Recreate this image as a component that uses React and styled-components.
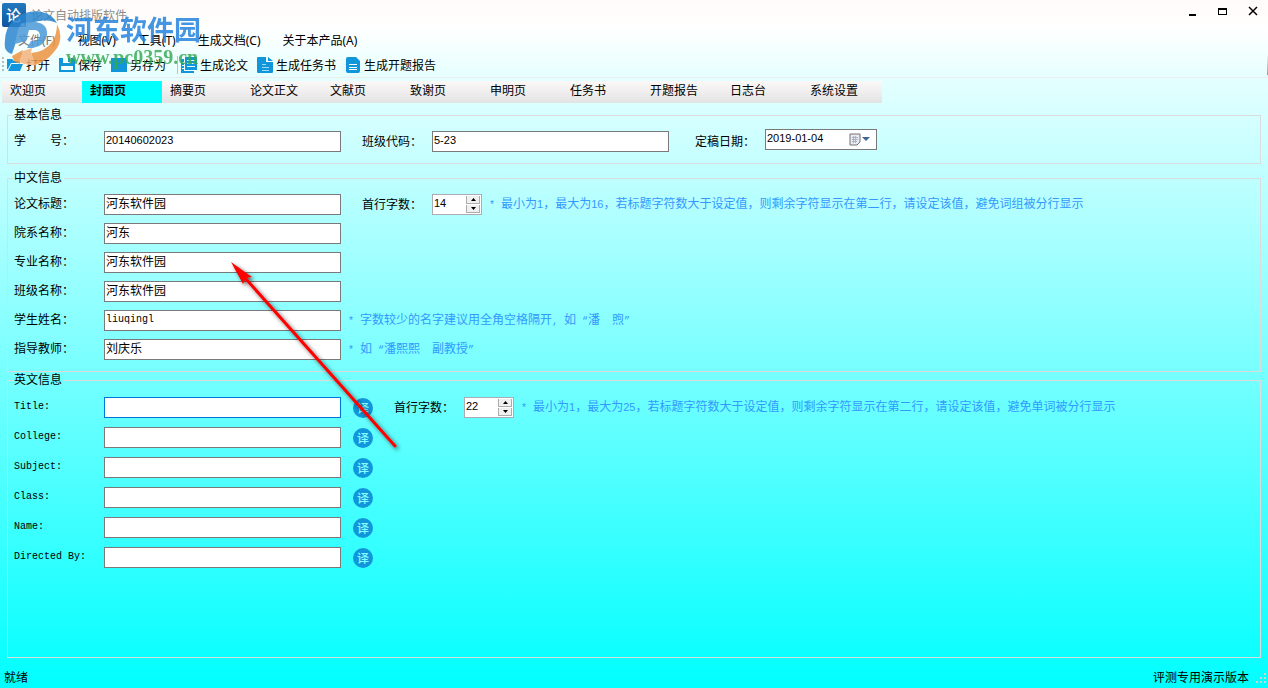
import React from "react";
import styled, { createGlobalStyle, css } from "styled-components";

const BLUE = "#1296db";
const CJK = '"Noto Sans CJK SC", sans-serif';

const GlobalStyle = createGlobalStyle`
  * { box-sizing: border-box; }
  body { margin: 0; font: 12px/14px ${CJK}; color: #000; }
  button, input { font: inherit; color: inherit; }
  button { border: 0; padding: 0; background: none; }
`;

const Window = styled.div`
  position: relative;
  display: flex;
  flex-direction: column;
  min-height: 100vh;
  background: linear-gradient(#fffbf9 0, #ffffff 28px, #e2ffff 84px, #00ffff 100%);
`;

const TitleBar = styled.header`
  display: flex;
  align-items: center;
  gap: 5px;
  height: 30px;
  padding: 0 10px 0 2px;
`;

const Title = styled.h1`
  flex: 1;
  margin: 0;
  font-size: 12px;
  font-weight: 400;
  line-height: 14px;
  color: #8c8c8c;
`;

const WindowButtons = styled.div`
  display: flex;
  gap: 20px;
  padding-bottom: 8px;
`;

const WindowButton = styled.button`
  display: flex;
  width: 10px;
  height: 10px;
`;

const MenuBar = styled.nav`
  display: flex;
  gap: 22px;
  height: 22px;
  padding-left: 18px;
`;

const MenuItem = styled.button`
  line-height: 22px;
  font-family: "Noto Sans", ${CJK};
  color: ${(p) => (p.$faded ? "#777" : "#000")};
`;

const Toolbar = styled.div`
  display: flex;
  align-items: center;
  height: 26px;
  padding: 1px 0 0 2px;
  border-bottom: 1px solid #ececec;
`;

const Grip = styled.span`
  width: 2px;
  height: 16px;
  margin-right: 3px;
  background: repeating-linear-gradient(#b5bcbc 0 2px, transparent 2px 4px);
`;

const Separator = styled.span`
  width: 1px;
  height: 18px;
  margin: 0 3px 0 2px;
  background: #bcc4c4;
`;

const ToolbarEnd = styled.span`
  width: 1px;
  height: 20px;
  margin-left: auto;
  background: linear-gradient(transparent, #999);
`;

const ToolButton = styled.button`
  display: flex;
  align-items: center;
  gap: 3px;
  margin-right: 9px;
  white-space: nowrap;
  line-height: 20px;
`;

const TabBar = styled.div`
  display: flex;
  align-self: flex-start;
  margin: 3px 0 0 2px;
  background: linear-gradient(#fcf8f8, #e3e3e3);
`;

const Tab = styled.button`
  width: 80px;
  height: 22px;
  padding: 0 0 4px 8px;
  text-align: left;
  line-height: 18px;
  font-weight: ${(p) => (p.$active ? 700 : 400)};
  background: ${(p) => (p.$active ? "#00ffff" : "none")};
`;

const Panel = styled.main`
  flex: 1;
  display: flex;
  flex-direction: column;
  padding: 5px 7px 0;
`;

const Group = styled.fieldset`
  flex: ${(p) => (p.$grow ? 1 : "none")};
  min-width: 0;
  margin: 0 0 ${(p) => p.$after || 0}px;
  padding: ${(p) => (p.$grow ? 10 : 9)}px 0 11px 6px;
  border: 1px solid #dcdcdc;
`;

const Legend = styled.legend`
  height: 14px;
  padding: 0 2px 0 0;
  line-height: 12px;
`;

const Rows = styled.div`
  display: flex;
  flex-direction: column;
  gap: ${(p) => p.$gap}px;
`;

const Row = styled.div`
  display: flex;
  align-items: center;
  height: 21px;
`;

const latin = {
  digits: css`font-family: "Liberation Sans", sans-serif; font-size: 11px;`,
  mono: css`font-family: "Liberation Mono", monospace; font-size: 10px;`,
};

const Label = styled.label`
  flex: none;
  width: ${(p) => (p.$lead ? 90 : 70)}px;
  padding-bottom: ${(p) => (p.$lead && !p.$mono ? 4 : 2)}px;
  white-space: pre;
  ${(p) => p.$mono && latin.mono}
`;

const TextBox = styled.input`
  width: 237px;
  height: 21px;
  padding: 0 2px ${(p) => (p.$face ? 3 : 5)}px 1px;
  border: 1px solid ${(p) => (p.$focused ? "#0078d7" : "#7a7a7a")};
  background: #fff;
  outline: 0;
  ${(p) => latin[p.$face]}
`;

const Space = styled.span`
  flex: none;
  width: ${(p) => p.$w}px;
`;

const SpinFrame = styled.span`
  display: flex;
  flex: none;
  width: 50px;
  height: 21px;
  padding: 1px;
  border: 1px solid #abadb3;
  background: #fff;
`;

const SpinInput = styled.input`
  flex: 1;
  min-width: 0;
  padding: 0 0 3px;
  border: 0;
  outline: 0;
  appearance: textfield;
  font: 11px/14px "Liberation Sans", sans-serif;
  &::-webkit-inner-spin-button { appearance: none; }
`;

const SpinButtons = styled.span`
  display: flex;
  flex-direction: column;
  gap: 1px;
  width: 14px;
`;

const SpinButton = styled.button`
  flex: 1;
  display: flex;
  align-items: center;
  justify-content: center;
  background: #f0f0f0;
  border: solid #adadad;
  border-width: 0 1px 1px;
`;

const DateFrame = styled.span`
  display: flex;
  align-items: center;
  width: 112px;
  height: 21px;
  margin-bottom: 5px;
  border: 1px solid #7a7a7a;
  background: #fff;
`;

const DateInput = styled.input`
  flex: 1;
  min-width: 0;
  padding: 0 1px 2px;
  border: 0;
  outline: 0;
  font: 11px/14px "Liberation Sans", sans-serif;
`;

const DateButton = styled.button`
  display: flex;
  width: 27px;
`;

const Hint = styled.span`
  white-space: pre;
  color: #3399ff;
  padding-left: 7px;
`;

const Latin = styled.span`
  ${(p) => latin[p.$face]}
`;

const Translate = styled.button`
  flex: none;
  width: 20px;
  height: 20px;
  margin-left: 12px;
  border-radius: 50%;
  background: ${BLUE};
  color: #8ff;
  font-weight: 500;
  line-height: 18px;
  text-align: center;
`;

const StatusBar = styled.footer`
  display: flex;
  align-items: center;
  justify-content: space-between;
  height: 30px;
  padding: 8px 1px 0 4px;
`;

const StatusEnd = styled.span`
  display: flex;
  align-items: flex-end;
  gap: 7px;
`;

const Watermark = styled.div`
  position: absolute;
  left: 4px;
  top: 10px;
  display: flex;
  gap: 4px;
  pointer-events: none;
`;

const WatermarkText = styled.div`
  opacity: 0.82;
  padding-top: 4px;
`;

const WatermarkName = styled.div`
  font: 700 27px/30px ${CJK};
  color: #1d7fdc;
`;

const WatermarkSite = styled.div`
  font: 700 20px/26px "Liberation Serif", serif;
  color: #35a853;
`;

const Arrow = styled.svg`
  position: absolute;
  left: 220px;
  top: 250px;
  pointer-events: none;
`;

function AppIcon() {
  return (
    <svg width="24" height="24" viewBox="0 0 24 24" overflow="visible">
      <defs>
        <linearGradient id="app" x1="0" y1="0" x2="0" y2="1">
          <stop offset="0" stopColor="#2279bd" />
          <stop offset="1" stopColor="#0f559d" />
        </linearGradient>
      </defs>
      <rect width="24" height="24" rx="2" fill="url(#app)" />
      <text x="4" y="18" fontSize="15" fontWeight="500" fill="#fff" fontFamily="Noto Sans CJK SC">论</text>
      <circle cx="21" cy="22" r="1.500" fill="#7fb5e0" />
    </svg>
  );
}

function FolderIcon() {
  return (
    <svg width="16" height="16" viewBox="0 0 16 16" fill={BLUE}>
      <path d="M0 2h5l2 2h6v2H4L1 12H0z" />
      <path d="M4.500 7H16l-3 7H1z" />
    </svg>
  );
}

function SaveIcon({ solid }) {
  return (
    <svg width="16" height="16" viewBox="0 0 16 16">
      <path d="M0 1h14l2 2v12H0z" fill={BLUE} />
      {!solid && <path d="M4 1h8v5H4zM2 9h12v4H2z" fill="#f2ffff" />}
      {!solid && <path d="M9 1h2v4H9z" fill={BLUE} />}
    </svg>
  );
}

function PagesIcon() {
  return (
    <svg width="16" height="16" viewBox="0 0 16 16">
      <path d="M0 2h3v12h10v2H0z" fill={BLUE} />
      <path d="M4 0h12v13H4z" fill={BLUE} />
      <path d="M6 3.500h8M6 6.500h8M6 9.500h8" stroke="#dff" />
      <path d="M1 5.500h2M1 8.500h2M1 11.500h2" stroke="#dff" />
    </svg>
  );
}

function DocIcon({ narrow }) {
  return narrow ? (
    <svg width="16" height="16" viewBox="-1 0 16 16">
      <path d="M2 0h8l4 4v10q0 2-2 2H2q-2 0-2-2V2q0-2 2-2z" fill={BLUE} />
      <path d="M3 7.500h8M3 10.500h8M3 12.500h8" stroke="#fff" />
    </svg>
  ) : (
    <svg width="16" height="16" viewBox="0 0 16 16">
      <path d="M1 0h8v5h7v10q0 1-1 1H1q-1 0-1-1V1q0-1 1-1zM11 0l5 4h-5z" fill={BLUE} />
      <path d="M5 7.500h4M5 10.500h7M5 13.500h7" stroke="#9fdcf5" />
    </svg>
  );
}

function WatermarkLogo() {
  return (
    <svg width="58" height="58" viewBox="0 0 58 58" opacity="0.85">
      <path d="M1 38Q-1 18 12 8 24-1 38 2 48 4 53 13 42 8 31 12 17 18 12 32L8 44Q3 43 1 38z" fill="#2a86cf" />
      <path d="M17 13l15-1q12 2 11 13-2 11-14 13h-6l4-7h3q6-1 6-6-1-5-6-5h-5l-3 11-11 3q2-14 6-21z" fill="#4a9ad8" />
      <path d="M53 14Q61 30 50 42 42 52 31 55L27 43Q41 42 48 32 53 25 53 14z" fill="#ee9440" />
      <path d="M8 46l11-6-3 14-6-3z" fill="#ee9440" />
      <path d="M19 41l9-3-1 5 5 12q-9 1-17-3z" fill="#f3b37d" />
    </svg>
  );
}

function Spinner({ id, value }) {
  return (
    <SpinFrame>
      <SpinInput id={id} type="number" defaultValue={value} />
      <SpinButtons>
        <SpinButton aria-label="增加">
          <svg width="5" height="3"><path d="M2.500 0L5 3H0z" /></svg>
        </SpinButton>
        <SpinButton aria-label="减少">
          <svg width="5" height="3"><path d="M0 0h5L2.500 3z" /></svg>
        </SpinButton>
      </SpinButtons>
    </SpinFrame>
  );
}

function LengthHint({ max, unit }) {
  return (
    <Hint>
      <Latin $face="mono">* </Latin>最小为<Latin $face="digits">1</Latin>，最大为
      <Latin $face="digits">{max}</Latin>
      ，若标题字符数大于设定值，则剩余字符显示在第二行，请设定该值，避免{unit}被分行显示
    </Hint>
  );
}

const chinese = [
  ["论文标题：", "河东软件园"],
  ["院系名称：", "河东"],
  ["专业名称：", "河东软件园"],
  ["班级名称：", "河东软件园"],
  ["学生姓名：", "liuqingl"],
  ["指导教师：", "刘庆乐"],
];
const english = ["Title:", "College:", "Subject:", "Class:", "Name:", "Directed By:"];
const tabs = ["欢迎页", "封面页", "摘要页", "论文正文", "文献页", "致谢页", "申明页", "任务书", "开题报告", "日志台", "系统设置"];
const menus = ["文件(F)", "视图(V)", "工具(T)", "生成文档(C)", "关于本产品(A)"];

export default function App() {
  return (
    <Window>
      <GlobalStyle />
      <TitleBar>
        <AppIcon />
        <Title>论文自动排版软件</Title>
        <WindowButtons>
          <WindowButton aria-label="最小化">
            <svg width="10" height="10"><path d="M1 8h7v2H1z" /></svg>
          </WindowButton>
          <WindowButton aria-label="最大化">
            <svg width="10" height="10"><path d="M0 2h9v7H0zM1 4v4h7V4z" fillRule="evenodd" /></svg>
          </WindowButton>
          <WindowButton aria-label="关闭">
            <svg width="10" height="10"><path d="M1 1l8 8M9 1L1 9" stroke="#000" strokeWidth="1.500" /></svg>
          </WindowButton>
        </WindowButtons>
      </TitleBar>
      <MenuBar>
        {menus.map((m, i) => <MenuItem key={m} $faded={i === 0}>{m}</MenuItem>)}
      </MenuBar>
      <Toolbar>
        <Grip />
        <ToolButton><FolderIcon />打开</ToolButton>
        <ToolButton><SaveIcon />保存</ToolButton>
        <ToolButton><SaveIcon solid />另存为</ToolButton>
        <Separator />
        <ToolButton><PagesIcon />生成论文</ToolButton>
        <ToolButton><DocIcon />生成任务书</ToolButton>
        <ToolButton><DocIcon narrow />生成开题报告</ToolButton>
        <ToolbarEnd />
      </Toolbar>
      <TabBar role="tablist">
        {tabs.map((t, i) => (
          <Tab key={t} role="tab" aria-selected={i === 1} $active={i === 1}>{t}</Tab>
        ))}
      </TabBar>
      <Panel>
        <Group $after={7}>
          <Legend>基本信息</Legend>
          <Row>
            <Label $lead htmlFor="no">学　　号：</Label>
            <TextBox id="no" $face="digits" defaultValue="20140602023" />
            <Space $w={21} />
            <Label htmlFor="code">班级代码：</Label>
            <TextBox id="code" $face="digits" defaultValue="5-23" />
            <Space $w={26} />
            <Label htmlFor="date">定稿日期：</Label>
            <DateFrame>
              <DateInput id="date" defaultValue="2019-01-04" />
              <DateButton aria-label="选择日期">
                <svg width="24" height="13">
                  <path d="M1 1h10v8l-3 3H1z" fill="#e8ecf0" stroke="#776e6e" />
                  <path d="M3 4.500h6M3 6.500h6M3 8.500h5M4.500 3v7M6.500 3v7" stroke="#a9b4c4" />
                  <path d="M13 4h8l-4 4z" fill="#41639b" />
                </svg>
              </DateButton>
            </DateFrame>
          </Row>
        </Group>
        <Group $after={1}>
          <Legend>中文信息</Legend>
          <Rows $gap={8}>
            {chinese.map(([label, value], i) => (
              <Row key={label}>
                <Label $lead htmlFor={`cn${i}`}>{label}</Label>
                <TextBox id={`cn${i}`} $face={i === 4 ? "mono" : undefined} defaultValue={value} />
                {i === 0 && (
                  <>
                    <Space $w={21} />
                    <Label htmlFor="cnLen">首行字数：</Label>
                    <Spinner id="cnLen" value="14" />
                    <LengthHint max="16" unit="词组" />
                  </>
                )}
                {i === 4 && (
                  <Hint>
                    <Latin $face="mono">* </Latin>字数较少的名字建议用全角空格隔开<Latin $face="mono">, </Latin>如
                    <Latin $face="mono"> “</Latin>潘　煦<Latin $face="mono">”</Latin>
                  </Hint>
                )}
                {i === 5 && (
                  <Hint>
                    <Latin $face="mono">* </Latin>如<Latin $face="mono"> “</Latin>潘熙熙　副教授<Latin $face="mono">”</Latin>
                  </Hint>
                )}
              </Row>
            ))}
          </Rows>
        </Group>
        <Group $grow>
          <Legend>英文信息</Legend>
          <Rows $gap={9}>
            {english.map((label, i) => (
              <Row key={label}>
                <Label $lead $mono htmlFor={`en${i}`}>{label}</Label>
                <TextBox id={`en${i}`} $focused={i === 0} />
                <Translate aria-label={`翻译 ${label}`}>译</Translate>
                {i === 0 && (
                  <>
                    <Space $w={21} />
                    <Label htmlFor="enLen">首行字数：</Label>
                    <Spinner id="enLen" value="22" />
                    <LengthHint max="25" unit="单词" />
                  </>
                )}
              </Row>
            ))}
          </Rows>
        </Group>
      </Panel>
      <StatusBar>
        <span>就绪</span>
        <StatusEnd>
          评测专用演示版本
          <svg width="11" height="11" fill="#c9d6d6">
            <path d="M8 0h2v2H8zM4 4h2v2H4zM8 4h2v2H8zM0 8h2v2H0zM4 8h2v2H4zM8 8h2v2H8z" />
          </svg>
        </StatusEnd>
      </StatusBar>
      <Watermark>
        <WatermarkLogo />
        <WatermarkText>
          <WatermarkName>河东软件园</WatermarkName>
          <WatermarkSite>www.pc0359.cn</WatermarkSite>
        </WatermarkText>
      </Watermark>
      <Arrow width="190" height="210" viewBox="0 0 190 210">
        <defs>
          <filter id="shade" x="-20%" y="-20%" width="140%" height="140%">
            <feDropShadow dx="2" dy="2" stdDeviation="2" floodOpacity="0.6" />
          </filter>
        </defs>
        <g filter="url(#shade)">
          <path d="M26 29L175 196" stroke="#f00" strokeWidth="3" strokeLinecap="round" />
          <path d="M11 12L32 27L26 28L23 34z" fill="#f00" />
        </g>
      </Arrow>
    </Window>
  );
}
